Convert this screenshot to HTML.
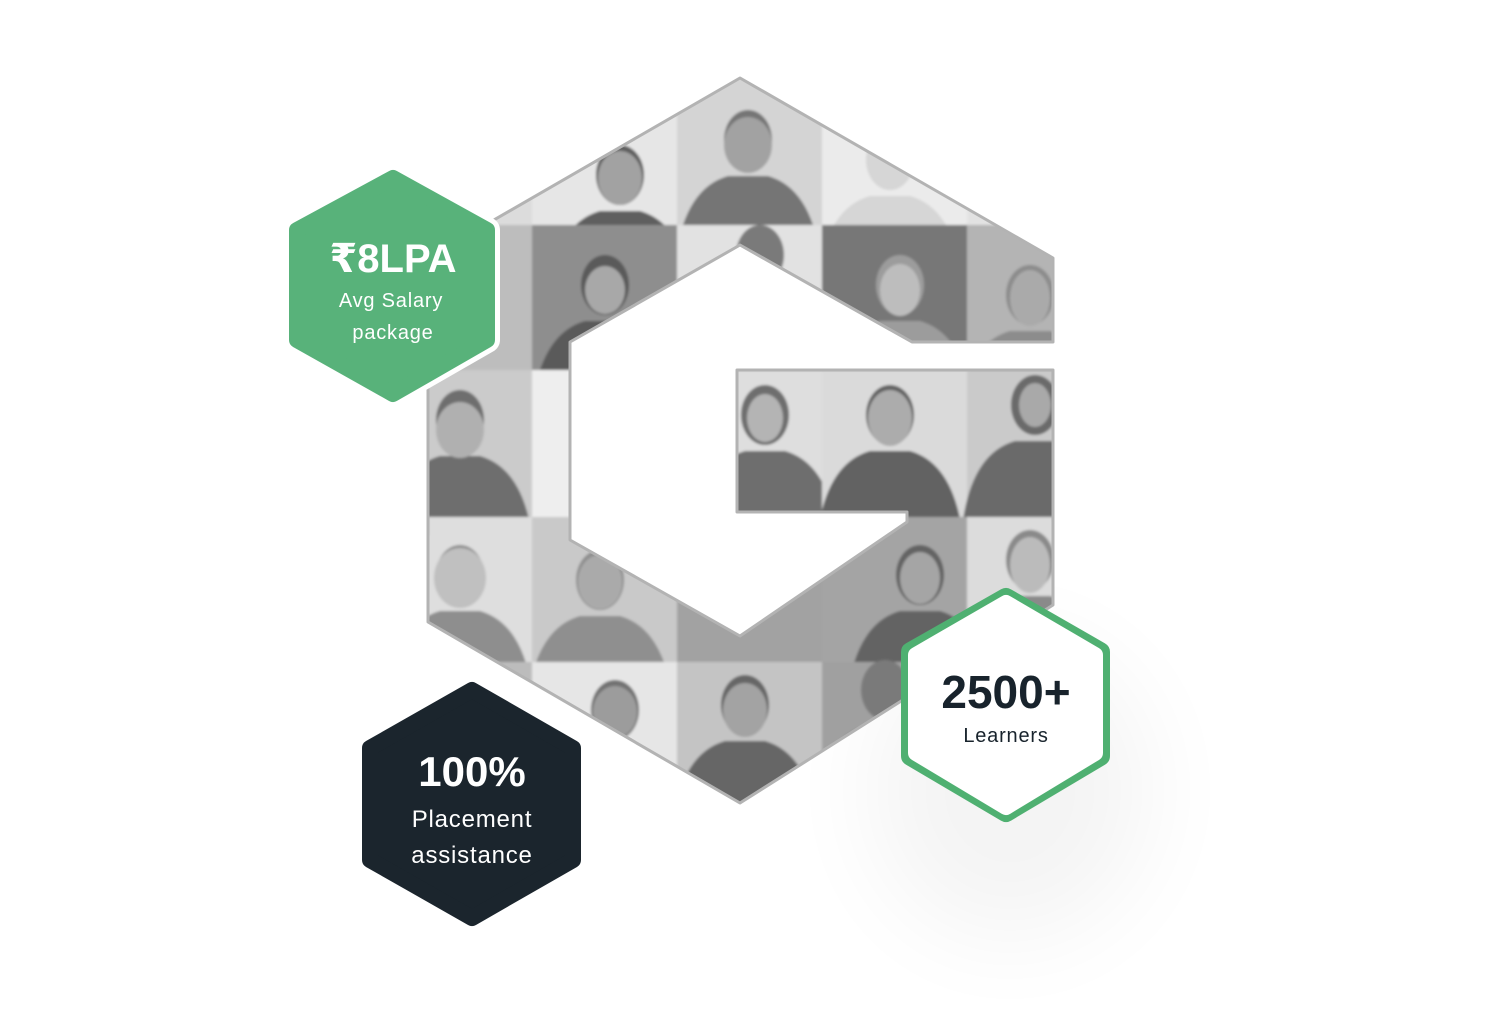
<!DOCTYPE html>
<html><head><meta charset="utf-8"><style>
html,body{margin:0;padding:0;background:#fff;}
svg{display:block;}
text{font-family:"Liberation Sans","DejaVu Sans",sans-serif;}
</style></head><body>
<svg width="1492" height="1010" viewBox="0 0 1492 1010" xmlns="http://www.w3.org/2000/svg">
<defs>
<clipPath id="g"><path d="M740,78 L1053,258 L1053,342 L912,342 L740,245 L570,342 L570,540 L740,636 L907,522 L907,512 L737,512 L737,370 L1053,370 L1053,605 L740,803 L428,622 L428,258 Z"/></clipPath>
<symbol id="p" overflow="visible"><ellipse cx="0" cy="0" rx="24" ry="30"/><path d="M-72,115 Q-62,48 -20,36 L20,36 Q62,48 72,115 Z"/></symbol>
<filter id="bl" x="-100%" y="-100%" width="300%" height="300%"><feGaussianBlur stdDeviation="50"/></filter>
<filter id="sf"><feGaussianBlur stdDeviation="1.2"/></filter>
</defs>

<ellipse cx="1010" cy="790" rx="140" ry="150" fill="#000" opacity="0.045" filter="url(#bl)"/>

<g clip-path="url(#g)"><g filter="url(#sf)">
<rect x="420" y="70" width="640" height="740" fill="#cfcfcf"/>
<!-- row0 -->
<rect x="428" y="78" width="104" height="147" fill="#dcdcdc"/>
<rect x="532" y="78" width="145" height="147" fill="#e6e6e6"/>
<use href="#p" x="620" y="175" fill="#5f5f5f"/><ellipse cx="620" cy="178" rx="22" ry="27" fill="#a2a2a2"/>
<rect x="677" y="78" width="145" height="147" fill="#d4d4d4"/>
<use href="#p" x="748" y="140" fill="#757575"/><ellipse cx="748" cy="145" rx="24" ry="28" fill="#a2a2a2"/>
<rect x="822" y="78" width="145" height="147" fill="#ebebeb"/>
<use href="#p" x="890" y="160" fill="#d6d6d6"/>
<rect x="967" y="78" width="86" height="147" fill="#e2e2e2"/>
<!-- row1 -->
<rect x="428" y="225" width="104" height="145" fill="#bdbdbd"/>
<rect x="532" y="225" width="145" height="145" fill="#8e8e8e"/>
<use href="#p" x="605" y="285" fill="#5a5a5a"/><ellipse cx="605" cy="290" rx="20" ry="24" fill="#a8a8a8"/>
<rect x="677" y="225" width="145" height="145" fill="#e2e2e2"/>
<use href="#p" x="760" y="255" fill="#7a7a7a"/>
<rect x="822" y="225" width="145" height="145" fill="#777"/>
<use href="#p" x="900" y="285" fill="#9c9c9c"/><ellipse cx="900" cy="290" rx="20" ry="26" fill="#bdbdbd"/>
<rect x="967" y="225" width="86" height="145" fill="#b4b4b4"/>
<use href="#p" x="1030" y="295" fill="#8c8c8c"/><ellipse cx="1030" cy="298" rx="20" ry="28" fill="#aaa"/>
<!-- row2 -->
<rect x="428" y="370" width="104" height="147" fill="#cbcbcb"/>
<use href="#p" x="460" y="420" fill="#6e6e6e"/><ellipse cx="460" cy="430" rx="24" ry="28" fill="#b0b0b0"/>
<rect x="532" y="370" width="145" height="147" fill="#eeeeee"/>
<rect x="737" y="370" width="85" height="147" fill="#dedede"/>
<use href="#p" x="765" y="415" fill="#6e6e6e"/><ellipse cx="765" cy="418" rx="18" ry="24" fill="#b4b4b4"/>
<rect x="822" y="370" width="145" height="147" fill="#dadada"/>
<use href="#p" x="890" y="415" fill="#626262"/><ellipse cx="890" cy="418" rx="22" ry="28" fill="#acacac"/>
<rect x="967" y="370" width="86" height="147" fill="#cacaca"/>
<use href="#p" x="1035" y="405" fill="#6a6a6a"/><ellipse cx="1035" cy="405" rx="16" ry="22" fill="#a9a9a9"/>
<!-- row3 -->
<rect x="428" y="517" width="104" height="145" fill="#dedede"/>
<use href="#p" x="460" y="575" fill="#8e8e8e"/><ellipse cx="460" cy="578" rx="26" ry="30" fill="#c0c0c0"/>
<rect x="532" y="517" width="145" height="145" fill="#c9c9c9"/>
<use href="#p" x="600" y="580" fill="#8f8f8f"/><ellipse cx="600" cy="582" rx="22" ry="27" fill="#aaa"/>
<rect x="677" y="517" width="145" height="145" fill="#a2a2a2"/>
<rect x="822" y="517" width="145" height="145" fill="#a4a4a4"/>
<use href="#p" x="920" y="575" fill="#636363"/><ellipse cx="920" cy="578" rx="20" ry="26" fill="#a5a5a5"/>
<rect x="967" y="517" width="86" height="145" fill="#dcdcdc"/>
<use href="#p" x="1030" y="560" fill="#8a8a8a"/><ellipse cx="1030" cy="565" rx="20" ry="28" fill="#bbb"/>
<!-- row4 -->
<rect x="428" y="662" width="104" height="141" fill="#bcbcbc"/>
<rect x="532" y="662" width="145" height="141" fill="#e6e6e6"/>
<use href="#p" x="615" y="710" fill="#727272"/><ellipse cx="615" cy="712" rx="22" ry="26" fill="#9c9c9c"/>
<rect x="677" y="662" width="145" height="141" fill="#c4c4c4"/>
<use href="#p" x="745" y="705" fill="#666"/><ellipse cx="745" cy="710" rx="22" ry="27" fill="#a3a3a3"/>
<rect x="822" y="662" width="145" height="141" fill="#a0a0a0"/>
<use href="#p" x="885" y="690" fill="#7a7a7a"/>
<rect x="967" y="662" width="86" height="141" fill="#cccccc"/>
</g></g>
<path d="M740,78 L1053,258 L1053,342 L912,342 L740,245 L570,342 L570,540 L740,636 L907,522 L907,512 L737,512 L737,370 L1053,370 L1053,605 L740,803 L428,622 L428,258 Z" fill="none" stroke="#b3b3b3" stroke-width="3" stroke-linejoin="round"/>

<!-- green badge -->
<polygon points="393,178 487,230 487,340 393,394 297,340 297,230" fill="#fff" stroke="#fff" stroke-width="26" stroke-linejoin="round"/>
<polygon points="393,178 487,230 487,340 393,394 297,340 297,230" fill="#58b27a" stroke="#58b27a" stroke-width="16" stroke-linejoin="round"/>
<text x="393" y="272" text-anchor="middle" font-size="40" font-weight="bold" fill="#fff">₹8LPA</text>
<text x="391" y="307" text-anchor="middle" font-size="20" fill="#fff" letter-spacing="0.8">Avg Salary</text>
<text x="393" y="339" text-anchor="middle" font-size="20" fill="#fff" letter-spacing="0.8">package</text>

<!-- dark badge -->
<polygon points="472,690 573,748 573,860 472,918 370,860 370,748" fill="#1b252d" stroke="#1b252d" stroke-width="16" stroke-linejoin="round"/>
<text x="472" y="786" text-anchor="middle" font-size="42" font-weight="bold" fill="#fff">100%</text>
<text x="472" y="827" text-anchor="middle" font-size="24" fill="#fff" letter-spacing="0.8">Placement</text>
<text x="472" y="863" text-anchor="middle" font-size="24" fill="#fff" letter-spacing="0.8">assistance</text>

<!-- white badge -->
<polygon points="1006,598 1100,652 1100,756 1006,812 911,756 911,652" fill="#4fb071" stroke="#4fb071" stroke-width="20" stroke-linejoin="round"/>
<polygon points="1006,603 1095,655 1095,753 1006,807 916,753 916,655" fill="#fff" stroke="#fff" stroke-width="16" stroke-linejoin="round"/>
<text x="1006" y="708" text-anchor="middle" font-size="46" font-weight="bold" fill="#18232c">2500+</text>
<text x="1006" y="742" text-anchor="middle" font-size="20" fill="#18232c" letter-spacing="0.8">Learners</text>
</svg>
</body></html>
